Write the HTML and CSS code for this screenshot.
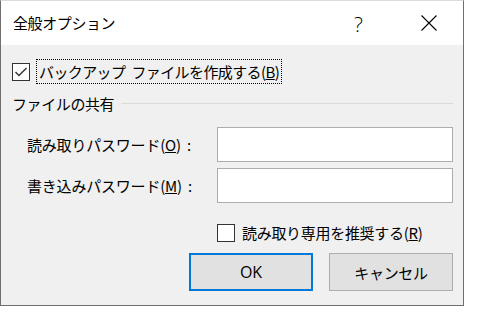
FILE: index.html
```html
<!DOCTYPE html>
<html lang="ja">
<head>
<meta charset="utf-8">
<title>全般オプション</title>
<link rel="stylesheet" href="styles.css">
</head>
<body>
<div class="dialog">
  <div class="titlebar">
    <span class="title">全般オプション</span>
    <span class="help">?</span>
    <span class="close">
      <svg width="16" height="16" viewBox="0 0 16 16"><path d="M0.5 0.5 L15.5 15.5 M15.5 0.5 L0.5 15.5" stroke="#000" stroke-width="1.1" fill="none"/></svg>
    </span>
  </div>
  <div class="content">
    <div class="check-row">
      <span class="box"><svg width="18" height="18" viewBox="0 0 18 18"><path d="M3.5 9 L7 12.5 L14.5 5" stroke="#333" stroke-width="1.4" fill="none"/></svg></span>
      <span class="focus">バックアップ<span class="gap"> </span>ファイルを作成する(<u>B</u>)</span>
    </div>
    <div class="group-head">
      <span class="group-title">ファイルの共有</span>
      <span class="rule"></span>
    </div>
    <div class="form-grid">
      <span class="label">読み取りパスワード(<u>O</u>)<span class="colon">:</span></span>
      <span class="input"></span>
      <span class="label">書き込みパスワード(<u>M</u>)<span class="colon">:</span></span>
      <span class="input"></span>
    </div>
    <div class="check-row check-right">
      <span class="box"></span>
      <span class="plain">読み取り専用を推奨する(<u>R</u>)</span>
    </div>
    <div class="buttons">
      <span class="btn btn-default">OK</span>
      <span class="btn">キャンセル</span>
    </div>
  </div>
</div>
</body>
</html>
```

FILE: styles.css
```css
html, body {
  margin: 0;
  padding: 0;
  background: #ffffff;
}
body {
  font-family: "Noto Sans CJK JP", "Noto Sans", sans-serif;
  font-size: 15px;
  color: #000;
}
.dialog {
  width: 464px;
  height: 306px;
  box-sizing: border-box;
  border: 1px solid #6f6f6f;
  border-top-color: #dcdcdc;
  display: flex;
  flex-direction: column;
}
.titlebar {
  height: 44px;
  background: #fff;
  display: flex;
  align-items: center;
  padding-left: 12px;
}
.title {
  flex: 1;
  font-size: 15px;
  letter-spacing: -0.4px;
  line-height: 20px;
}
.help {
  font-family: "Open Sans", sans-serif;
  font-weight: 300;
  font-size: 21px;
  line-height: 20px;
  width: 10px;
  margin-right: 57px;
  margin-top: 1px;
}
.close {
  width: 16px;
  height: 16px;
  display: flex;
  margin-right: 26px;
}
.content {
  flex: 1;
  background: #f0f0f0;
  padding: 14px 10px 0 11px;
}
.check-row {
  display: flex;
  align-items: center;
  height: 25px;
}
.box {
  width: 18px;
  height: 18px;
  box-sizing: border-box;
  border: 1px solid #333;
  background: #fff;
  display: flex;
  align-items: center;
  justify-content: center;
  flex: none;
}
.box svg {
  margin: -1px;
}
.focus {
  margin-left: 6px;
  height: 25px;
  box-sizing: border-box;
  border: 1px dotted #000;
  padding: 0 2px;
  line-height: 23px;
  letter-spacing: -0.6px;
  white-space: nowrap;
}
.gap {
  display: inline-block;
  width: 6px;
}
.group-head {
  display: flex;
  align-items: center;
  height: 20px;
  margin-top: 9px;
}
.group-title {
  white-space: nowrap;
  letter-spacing: -0.4px;
  flex: none;
}
.rule {
  flex: 1;
  height: 1px;
  background: #dadada;
  margin-left: 7px;
  margin-top: 1px;
}
.form-grid {
  display: grid;
  grid-template-columns: 190px 236px;
  grid-auto-rows: 35px;
  row-gap: 6px;
  margin-top: 14px;
  margin-left: 15px;
}
.label {
  align-self: center;
  letter-spacing: -0.2px;
  white-space: nowrap;
}
.colon {
  margin-left: 6px;
}
.input {
  box-sizing: border-box;
  border: 1px solid #adadad;
  background: #fff;
}
.check-right {
  margin-top: 17px;
  margin-left: 205px;
}
.plain {
  margin-left: 7px;
  letter-spacing: -0.3px;
  white-space: nowrap;
}
.buttons {
  display: flex;
  justify-content: flex-end;
  gap: 16px;
  margin-top: 8px;
}
.btn {
  width: 124px;
  height: 38px;
  box-sizing: border-box;
  border: 1px solid #adadad;
  background: #e1e1e1;
  display: flex;
  align-items: center;
  justify-content: center;
  letter-spacing: -0.3px;
}
.btn-default {
  border: 2px solid #0078d7;
  font-family: "Open Sans", sans-serif;
  font-size: 16px;
  letter-spacing: 0;
}
```
